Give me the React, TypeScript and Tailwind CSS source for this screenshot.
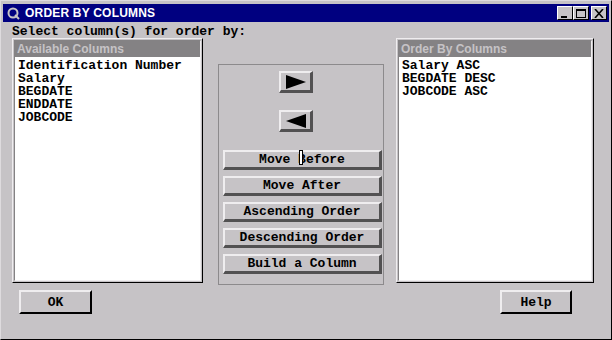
import React from 'react';

const MONO = "font-['Liberation_Mono',monospace] font-bold text-[13px] leading-[13px] text-black";

const available = ['Identification Number', 'Salary', 'BEGDATE', 'ENDDATE', 'JOBCODE'];
const ordered = ['Salary ASC', 'BEGDATE DESC', 'JOBCODE ASC'];
const actions = ['Move Before', 'Move After', 'Ascending Order', 'Descending Order', 'Build a Column'];

function ListBox({ title, items, width }: { title: string; items: string[]; width: string }) {
  return (
    <div className={`${width} h-[245px] flex flex-col border border-t-[#efedef] border-l-[#efedef] border-r-black border-b-black p-[1px]`}>
      <div className="flex flex-1 flex-col border border-t-[#848284] border-l-[#848284] border-r-[#efedef] border-b-[#efedef]">
        <div className="h-[16px] bg-[#848284] pl-[2px] flex items-center font-['Liberation_Sans',Arial,sans-serif] font-bold text-[12px] text-[#c6c3c6]">
          {title}
        </div>
        <div className="flex-1 bg-white pl-[3px] pt-[2px]">
          {items.map((it) => (
            <div key={it} className={MONO}>
              {it}
            </div>
          ))}
        </div>
      </div>
    </div>
  );
}

function ArrowButton({ dir }: { dir: 'right' | 'left' }) {
  return (
    <button
      type="button"
      className="ml-[60px] w-[34px] h-[22px] flex items-center justify-center bg-[#c6c3c6] border-t-2 border-l-2 border-t-[#efedef] border-l-[#efedef] border-b-[3px] border-r-[3px] border-b-[#525152] border-r-[#525152]"
    >
      <svg width="20" height="14" viewBox="0 0 20 14">
        {dir === 'right' ? (
          <polygon points="0,0 20,7 0,14" fill="#000" />
        ) : (
          <polygon points="20,0 0,7 20,14" fill="#000" />
        )}
      </svg>
    </button>
  );
}

function ActionButton({ label }: { label: string }) {
  return (
    <button
      type="button"
      className={`ml-[4px] w-[159px] h-[20px] flex items-center justify-center bg-[#c6c3c6] border-t-2 border-l-2 border-t-[#efedef] border-l-[#efedef] border-b-[3px] border-r-[3px] border-b-[#525152] border-r-[#525152] ${MONO}`}
    >
      {label}
    </button>
  );
}

function DialogButton({ label, width }: { label: string; width: string }) {
  return (
    <button
      type="button"
      className={`${width} h-[24px] flex items-center justify-center bg-[#c6c3c6] border-t-2 border-l-2 border-t-[#efedef] border-l-[#efedef] border-b-2 border-r-2 border-b-black border-r-black ${MONO}`}
    >
      {label}
    </button>
  );
}

function TitleButton({ kind }: { kind: 'min' | 'max' | 'close' }) {
  return (
    <div className="w-[16px] h-[14px] bg-[#c6c3c6] border-t border-l border-t-white border-l-white border-b border-r border-b-black border-r-black flex items-center justify-center">
      <svg width="10" height="9" viewBox="0 0 10 9">
        {kind === 'min' && <rect x="1" y="7" width="6" height="2" fill="#000" />}
        {kind === 'max' && (
          <>
            <rect x="0.5" y="0.5" width="9" height="8" fill="none" stroke="#000" />
            <rect x="0" y="0" width="10" height="2" fill="#000" />
          </>
        )}
        {kind === 'close' && (
          <path d="M1 0 L9 9 M9 0 L1 9" stroke="#000" strokeWidth="1.6" />
        )}
      </svg>
    </div>
  );
}

export default function App() {
  return (
    <div className="relative w-[612px] h-[340px] flex flex-col bg-[#c6c3c6] border border-t-[#dedbde] border-l-[#dedbde] border-r-black border-b-black">
      {/* title bar */}
      <div className="mx-[2px] mt-[3px] h-[18px] bg-[#000080] flex items-center pl-[4px] pr-[2px]">
        <svg width="13" height="13" viewBox="0 0 13 13" className="mr-[5px]">
          <circle cx="6" cy="6" r="4.5" fill="none" stroke="#c6c3c6" strokeWidth="2" />
          <circle cx="6" cy="6" r="2" fill="#000080" />
          <path d="M8 8 L12 12" stroke="#c6c3c6" strokeWidth="2" />
        </svg>
        <span className="font-['Liberation_Sans',Arial,sans-serif] font-bold text-[12px] text-white tracking-[0.2px]">
          ORDER BY COLUMNS
        </span>
        <div className="ml-auto flex items-center">
          <TitleButton kind="min" />
          <TitleButton kind="max" />
          <div className="w-[2px]" />
          <TitleButton kind="close" />
        </div>
      </div>

      <div className={`pl-[11px] pt-[3px] h-[14px] ${MONO}`}>Select column(s) for order by:</div>

      <div className="mt-[2px] pl-[11px] flex items-start">
        <ListBox title="Available Columns" items={available} width="w-[191px]" />

        <div className="ml-[15px] mt-[26px] w-[166px] h-[221px] border border-[#8c8a8c] flex flex-col items-start pt-[6px]">
          <ArrowButton dir="right" />
          <div className="h-[17px]" />
          <ArrowButton dir="left" />
          <div className="h-[18px]" />
          <div className="flex flex-col gap-[6px]">
            {actions.map((a) => (
              <ActionButton key={a} label={a} />
            ))}
          </div>
        </div>

        <div className="ml-[12px]">
          <ListBox title="Order By Columns" items={ordered} width="w-[198px]" />
        </div>
      </div>

      <div className="mt-[5px] flex pl-[18px]">
        <DialogButton label="OK" width="w-[73px]" />
        <div className="ml-[408px]">
          <DialogButton label="Help" width="w-[72px]" />
        </div>
      </div>

      {/* I-beam mouse cursor resting over "Move Before" */}
      <div className="absolute left-[298px] top-[149px] w-[4px] h-[15px] bg-white border border-black" />
    </div>
  );
}
